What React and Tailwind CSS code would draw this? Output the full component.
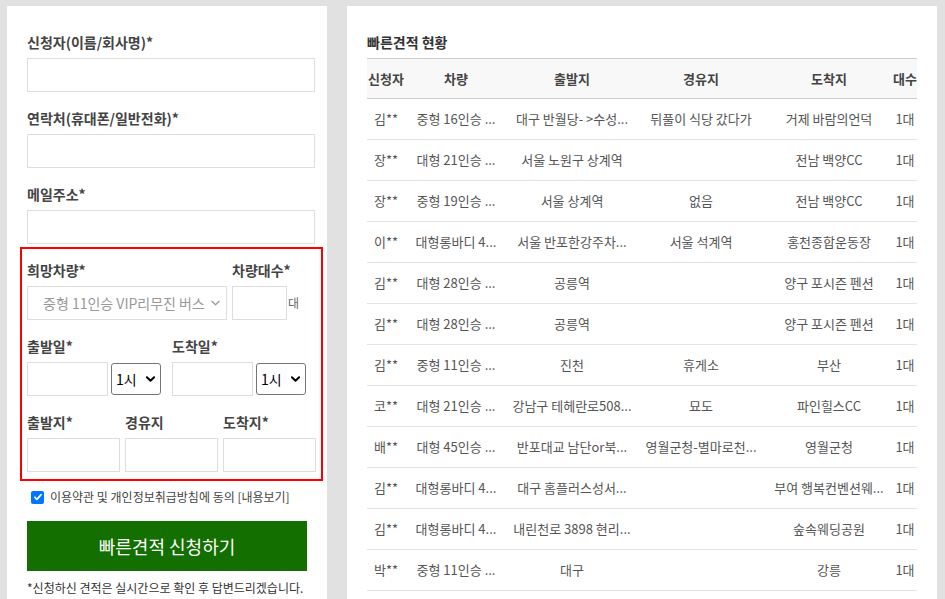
import React from "react";

const rows = [
  ["김**", "중형 16인승 ...", "대구 반월당- >수성...", "뒤풀이 식당 갔다가", "거제 바람의언덕", "1대"],
  ["장**", "대형 21인승 ...", "서울 노원구 상계역", "", "전남 백양CC", "1대"],
  ["장**", "중형 19인승 ...", "서울 상계역", "없음", "전남 백양CC", "1대"],
  ["이**", "대형롱바디 4...", "서울 반포한강주차...", "서울 석계역", "홍천종합운동장", "1대"],
  ["김**", "대형 28인승 ...", "공릉역", "", "양구 포시즌 펜션", "1대"],
  ["김**", "대형 28인승 ...", "공릉역", "", "양구 포시즌 펜션", "1대"],
  ["김**", "중형 11인승 ...", "진천", "휴게소", "부산", "1대"],
  ["코**", "대형 21인승 ...", "강남구 테헤란로508...", "묘도", "파인힐스CC", "1대"],
  ["배**", "대형 45인승 ...", "반포대교 남단or북...", "영월군청-별마로천...", "영월군청", "1대"],
  ["김**", "대형롱바디 4...", "대구 홈플러스성서...", "", "부여 행복컨벤션웨...", "1대"],
  ["김**", "대형롱바디 4...", "내린천로 3898 현리...", "", "숲속웨딩공원", "1대"],
  ["박**", "중형 11인승 ...", "대구", "", "강릉", "1대"],
];

function Label({ children }) {
  return (
    <div className="h-[20px] leading-[20px] text-[14px] font-bold text-[#444] whitespace-nowrap">
      {children}
    </div>
  );
}

function Box({ className = "" }) {
  return <div className={`h-[34px] border border-[#dedede] bg-white ${className}`} />;
}

function Chevron({ className = "", strokeWidth = 1.6 }) {
  return (
    <svg viewBox="0 0 10 6" className={className} fill="none">
      <path d="M1 1l4 4 4-4" stroke="currentColor" strokeWidth={strokeWidth} strokeLinecap="round" strokeLinejoin="round" />
    </svg>
  );
}

function HourSelect() {
  return (
    <div className="ml-[3px] w-[50px] h-[32px] border border-[#767676] rounded-[3px] flex items-center pl-[4px] pr-[5px] text-[14px] text-black">
      <span className="flex-1 leading-[20px]">1시</span>
      <Chevron className="w-[9px] h-[6px] text-black" strokeWidth={2.2} />
    </div>
  );
}

function LeftPanel() {
  return (
    <div className="w-[320px] h-[640px] shrink-0 bg-white pt-[26px] pl-[20px] flex flex-col">
      <Label>신청자(이름/회사명)*</Label>
      <Box className="mt-[6px] w-[288px]" />
      <div className="mt-[16px]">
        <Label>연락처(휴대폰/일반전화)*</Label>
      </div>
      <Box className="mt-[6px] w-[288px]" />
      <div className="mt-[16px]">
        <Label>메일주소*</Label>
      </div>
      <Box className="mt-[6px] w-[288px]" />

      <div className="mt-[3px] ml-[-7px] w-[303px] border-2 border-[#ff0000] pt-[11px] px-[5px] pb-[7px]">
        <div className="flex">
          <div className="w-[200px]">
            <Label>희망차량*</Label>
            <div className="mt-[6px] h-[34px] border border-[#dedede] flex items-center pl-[15px] pr-[6px] text-[14px] text-[#999]">
              <span className="flex-1 whitespace-nowrap leading-[20px]">중형 11인승 VIP리무진 버스</span>
              <Chevron className="w-[9px] h-[6px] text-[#999]" strokeWidth={1.4} />
            </div>
          </div>
          <div className="ml-[5px]">
            <Label>차량대수*</Label>
            <div className="mt-[6px] flex items-center">
              <Box className="w-[55px]" />
              <span className="ml-[1px] text-[12px] text-[#666] leading-[16px] mb-[1px]">대</span>
            </div>
          </div>
        </div>

        <div className="mt-[16px] flex">
          <div>
            <Label>출발일*</Label>
            <div className="mt-[6px] flex items-center">
              <Box className="w-[81px]" />
              <HourSelect />
            </div>
          </div>
          <div className="ml-[11px]">
            <Label>도착일*</Label>
            <div className="mt-[6px] flex items-center">
              <Box className="w-[81px]" />
              <HourSelect />
            </div>
          </div>
        </div>

        <div className="mt-[16px] grid grid-cols-[93px_93px_93px] gap-x-[5px]">
          <Label>출발지*</Label>
          <Label>경유지</Label>
          <Label>도착지*</Label>
          <Box className="mt-[6px]" />
          <Box className="mt-[6px]" />
          <Box className="mt-[6px]" />
        </div>
      </div>

      <div className="mt-[8px] pl-[4px] h-[16px] flex items-center gap-[6px]">
        <div className="w-[13px] h-[13px] rounded-[2px] bg-[#0075ff] flex items-center justify-center">
          <svg viewBox="0 0 12 12" className="w-[10px] h-[10px]" fill="none">
            <path d="M2.2 6.3l2.5 2.5 5-5.6" stroke="white" strokeWidth="2" strokeLinecap="round" strokeLinejoin="round" />
          </svg>
        </div>
        <span className="text-[12px] leading-[16px] text-[#444] whitespace-nowrap">
          이용약관 및 개인정보취급방침에 동의 [내용보기]
        </span>
      </div>

      <div className="mt-[16px] w-[280px] h-[50px] bg-[#136f00] flex items-center justify-center text-white text-[18px] leading-[24px]">
        빠른견적 신청하기
      </div>

      <div className="mt-[9px] text-[12px] leading-[16px] text-[#333] whitespace-nowrap">
        *신청하신 견적은 실시간으로 확인 후 답변드리겠습니다.
      </div>
    </div>
  );
}

function RightPanel() {
  const widths = ["w-[38px]", "w-[102px]", "w-[130px]", "w-[128px]", "w-[128px]", "w-[24px]"];
  const heads = ["신청자", "차량", "출발지", "경유지", "도착지", "대수"];
  return (
    <div className="w-[590px] h-[640px] shrink-0 bg-white pt-[26px] pl-[20px]">
      <div className="h-[20px] leading-[20px] text-[14px] font-bold text-[#333]">빠른견적 현황</div>
      <div className="mt-[6px] w-[550px] overflow-hidden">
        <div className="w-[560px] text-[13px]">
          <div className="flex h-[41px] bg-[#f8f8f8] border-y border-[#cccccc]">
            {heads.map((h, i) => (
              <div key={i} className={`${widths[i]} shrink-0 flex items-center justify-center font-bold text-[#444] whitespace-nowrap`}>
                {h}
              </div>
            ))}
          </div>
          {rows.map((r, ri) => (
            <div key={ri} className="flex h-[41px] border-b border-[#e3e3e3]">
              {r.map((c, ci) => (
                <div key={ci} className={`${widths[ci]} shrink-0 flex items-center justify-center text-[#555] whitespace-nowrap`}>
                  {c}
                </div>
              ))}
            </div>
          ))}
        </div>
      </div>
    </div>
  );
}

export default function App() {
  return (
    <div className="w-[945px] h-[599px] overflow-hidden bg-[#e1e1e1] flex items-start gap-[20px] pt-[6px] pl-[7px] font-['Noto_Sans_CJK_KR','Noto_Sans',sans-serif]">
      <LeftPanel />
      <RightPanel />
    </div>
  );
}
